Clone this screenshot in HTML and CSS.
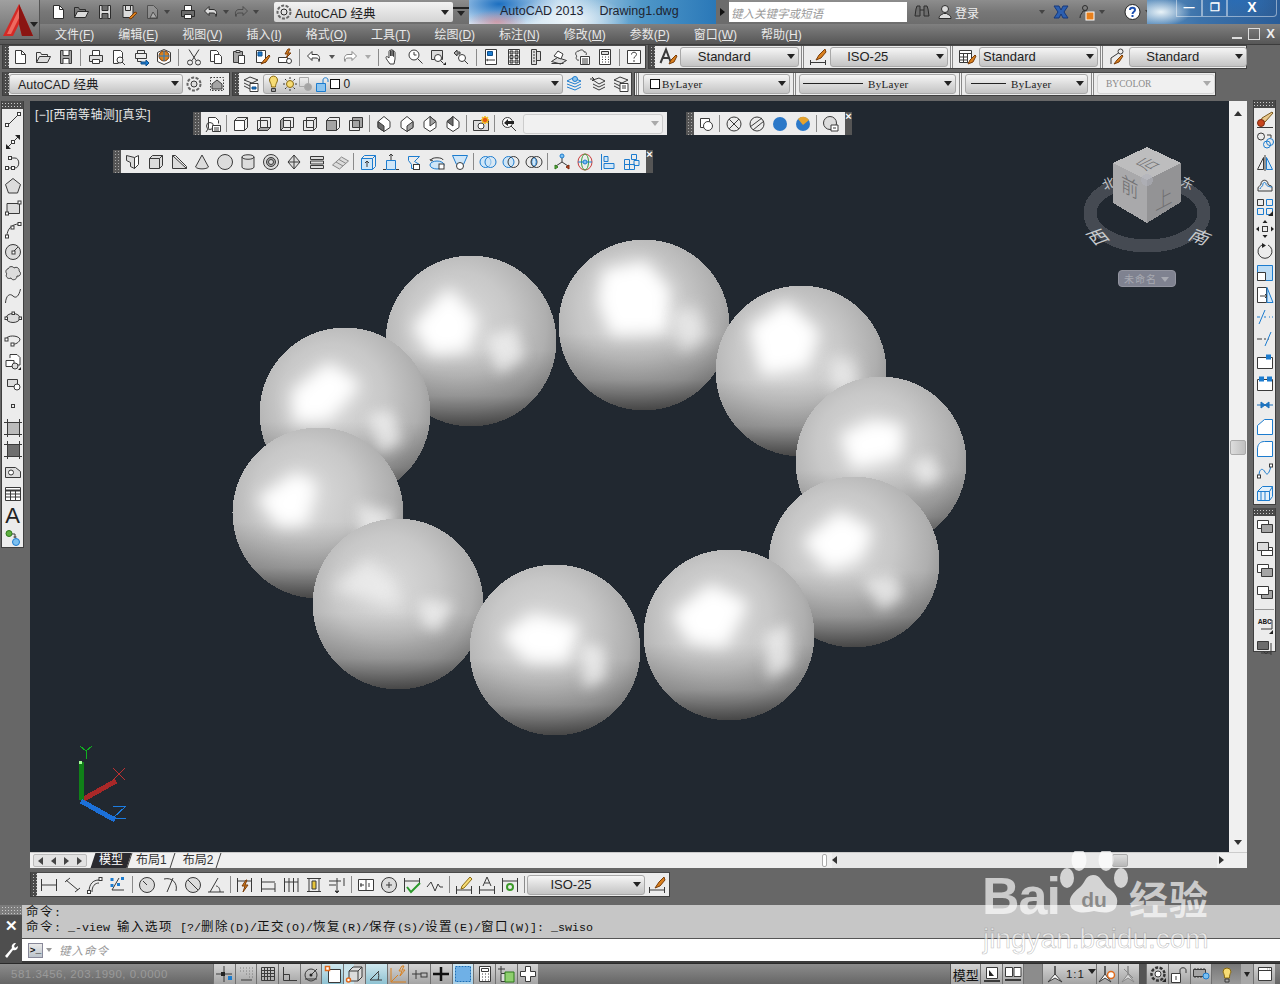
FILE: index.html
```html
<!DOCTYPE html>
<html lang="zh-CN">
<head>
<meta charset="utf-8">
<title>AutoCAD 2013 - Drawing1.dwg</title>
<link rel="stylesheet" href="styles.css">
</head>
<body>
<div class="app">

<a class="logo"><svg class="logosvg"><path class="lgr" d="M19 4L3 36h10l6-12 3 12h11z"/><path class="lgd" d="M19 4l14 32H22l-3-12z"/><path class="lgh" d="M19 9L7 34h4l8-16z"/></svg><i class="logoarrow"></i></a>

<header class="titlebar">
  <div class="qat">
    <span class="q"><svg class="ic wi"><path d="M4.5 2.5h6l4 4v9h-10z" class="wf"/><path d="M10.5 2.5v4h4"/></svg></span>
    <span class="q"><svg class="ic wi"><path d="M2.5 14.5v-10h4l1 2h6v2"/><path d="M2.5 14.5l3-6h11l-3 6z" class="lf"/></svg></span>
    <span class="q"><svg class="ic wi"><path d="M3.5 2.5h11v13h-11z" class="lf"/><path d="M6 2.5v5h6v-5M6 15.5v-5h6v5" class="df"/></svg></span>
    <span class="q"><svg class="ic wi"><path d="M3 2.5h10v12H3z" class="lf"/><path d="M5.500 2.500v5h5v-5"/><path d="M9 15l6-6 2 1-6 6z" class="o"/></svg></span>
    <span class="q"><svg class="ic wi dim"><path d="M4.500 2.500h6l4 4v9h-10z" class="gf"/><path d="M7 15l3-6 4 6z" class="lf"/></svg></span>
    <span class="qd"></span>
    <span class="q wide"><svg class="ic wi"><path d="M5.500 7V2.500h7V7" class="wf"/><path d="M2.500 7.500h13v6h-13z" class="df"/><path d="M5.500 11.500h7v4h-7z" class="wf"/></svg></span>
    <span class="q"><svg class="ic wi"><path d="M7 3.500L2.500 8 7 12.500V10h4c2 0 3 1 3 3.500 1.500-4 0-7-3-7H7z" class="lf"/></svg></span>
    <span class="qd"></span>
    <span class="q"><svg class="ic wi dim"><path d="M11 3.500L15.500 8 11 12.500V10H7c-2 0-3 1-3 3.500-1.500-4 0-7 3-7h4z"/></svg></span>
    <span class="qd"></span>
  </div>
  <div class="wscombo"><svg class="ic wi"><circle cx="9" cy="9" r="3"/><circle cx="9" cy="9" r="6.500" class="dash"/></svg><span>AutoCAD 经典</span><i class="car"></i></div>
  <span class="qmore"><i class="car"></i></span>
  <div class="glass"><span>AutoCAD 2013</span><span>Drawing1.dwg</span></div>
  <span class="sarrow"></span>
  <div class="search">键入关键字或短语</div>
  <div class="info">
    <svg class="ic wi"><path d="M3 6l1-3h3v10H2zM15 6l-1-3h-3v10h5zM7 7h4" class="df"/></svg>
    <svg class="ic wi login"><circle cx="9" cy="6" r="3.500" class="lf"/><path d="M3 15.500c0-4 4-4 4.500-5h3c.5 1 4.500 1 4.500 5z" class="lf"/></svg>
    <span class="login-t">登录</span>
    <i class="qd2"></i>
    <svg class="ic x"><path d="M2 3h5l2 4 2-4h5l-4 6 4 6h-5l-2-4-2 4H2l4-6z" class="blx"/></svg>
    <svg class="ic wi help1"><circle cx="8" cy="5" r="2.500"/><path d="M3 15c0-4 2-4 3-7h4v3" /><rect x="9" y="9" width="8" height="8" class="org"/></svg>
    <i class="qd2"></i>
    <svg class="ic help2"><circle cx="9.500" cy="9" r="7.500" class="wfb"/><path d="M7 7c0-3 5-3 5 0 0 2-2.500 1.500-2.500 4M9.500 12v2" class="blst"/></svg>
    <i class="qd2"></i>
  </div>
  <div class="glass2"><span class="wb">&#8212;</span><span class="wb rest">&#10064;</span><span class="wb close">X</span></div>
</header>

<nav class="menubar">
  <span>文件(<u>F</u>)</span><span>编辑(<u>E</u>)</span><span>视图(<u>V</u>)</span><span>插入(<u>I</u>)</span><span>格式(<u>O</u>)</span><span>工具(<u>T</u>)</span><span>绘图(<u>D</u>)</span><span>标注(<u>N</u>)</span><span>修改(<u>M</u>)</span><span>参数(<u>P</u>)</span><span>窗口(<u>W</u>)</span><span>帮助(<u>H</u>)</span>
  <div class="docbtns"><b class="d1"></b><b class="d2"></b><b class="d3">X</b></div>
</nav>

<div class="row r1">
 <div class="tb t-std">
  <i class="grip"></i>
  <span class="c"><svg class="ic"><path d="M4.500 2.500h6l4 4v9h-10z" class="wf"/><path d="M10.500 2.500v4h4"/></svg></span>
  <span class="c"><svg class="ic"><path d="M2.500 14.500v-10h4l1 2h6v2"/><path d="M2.500 14.500l3-6h11l-3 6z" class="lf"/></svg></span>
  <span class="c"><svg class="ic"><path d="M3.500 2.500h11v13h-11z" class="gf"/><path d="M6 2.500v5h6v-5M6 15.500v-5h6v5" class="wf"/></svg></span>
  <i class="s"></i>
  <span class="c"><svg class="ic"><path d="M5.500 7V2.500h7V7" class="wf"/><path d="M2.500 7.500h13v6h-13z" class="lf"/><path d="M5.500 11.500h7v4h-7z" class="wf"/></svg></span>
  <span class="c"><svg class="ic"><path d="M4.500 15.500v-13h7l2 2v6M4.500 15.500h5" class="wf"/><circle cx="11" cy="12" r="3"/><path d="M13 14l3 3"/></svg></span>
  <span class="c"><svg class="ic"><path d="M5.500 5V2.500h7V5M3.500 5.500h11v5h-11zM5.500 10.500v3h4"/><path d="M9 14h5v-2l3 3-3 3v-2H9z" class="bf"/></svg></span>
  <span class="c"><svg class="ic"><path d="M9 1.500l6.500 3v9L9 16.500l-6.500-3v-9z" class="wf"/><circle cx="9" cy="8" r="5" class="o"/><path d="M9 3v10M4 8h10" class="bs"/></svg></span>
  <i class="s"></i>
  <span class="c"><svg class="ic"><path d="M4 1.500l7 11M14 1.500l-7 11"/><circle cx="5" cy="14.500" r="2.500"/><circle cx="13" cy="14.500" r="2.500"/></svg></span>
  <span class="c"><svg class="ic"><path d="M3.500 2.500h6l2 2v9h-8z" class="wf"/><path d="M7.500 6.500h5l2 2v7h-7z" class="wf"/></svg></span>
  <span class="c"><svg class="ic"><path d="M3.500 3.500h9v11h-9z" class="gf"/><path d="M6 2.500h4v2H6z" class="lf"/><path d="M8.500 7.500h6v8h-6z" class="wf"/></svg></span>
  <span class="c"><svg class="ic"><path d="M3.500 2.500h9v12h-9z" class="wf"/><path d="M5 4h4v4H5z" class="bf"/><path d="M16 7l-5 5-3 4 5-2 4-6z" class="o"/></svg></span>
  <span class="c"><svg class="ic"><path d="M2.500 9.500h9v5h-9z" class="wf"/><path d="M12 1l-3 5h3l-2 4 5-5h-3l2-4z" class="o"/><circle cx="13" cy="13" r="2.500" class="wf"/></svg></span>
  <i class="s"></i>
  <span class="c"><svg class="ic"><path d="M7 3.500L2.500 8 7 12.500V10h4c2 0 3 1 3 3.500 1.500-4 0-7-3-7H7z" class="wf"/></svg></span>
  <span class="dd"></span>
  <span class="c"><svg class="ic gy"><path d="M11 3.500L15.500 8 11 12.500V10H7c-2 0-3 1-3 3.500-1.500-4 0-7 3-7h4z" class="wf"/></svg></span>
  <span class="dd gd"></span>
  <i class="s"></i>
  <span class="c"><svg class="ic"><path d="M6 16c-2-3-4-5-4-6.500s1.500-1 3 .5V3.500c0-1.300 1.500-1.300 1.500 0V8 2.500c0-1.300 1.500-1.300 1.500 0V8 3c0-1.300 1.500-1.300 1.500 0v5.500-4c0-1.300 1.500-1.300 1.500 0V11l-1 5z" class="wf"/></svg></span>
  <span class="c"><svg class="ic"><circle cx="7" cy="7" r="5" class="wf"/><path d="M7 4v3h2.500M10.500 10.500l5 5"/></svg></span>
  <span class="c"><svg class="ic"><path d="M2.500 2.500h11v9h-11z" class="lf"/><circle cx="9" cy="10" r="3.500" class="wf"/><path d="M11.500 12.500l3 3"/><path d="M14 17l3-3v3z" class="k"/></svg></span>
  <span class="c"><svg class="ic"><circle cx="10" cy="10" r="3.500" class="wf"/><path d="M12.500 12.500l3.500 3.500"/><path d="M2 5l3-3v2h3v2H5v2z" class="gf"/></svg></span>
  <i class="s"></i>
  <span class="c"><svg class="ic"><path d="M3.500 1.500h11v15h-11z" class="wf"/><path d="M5.500 3.500h5v4h-5z" class="bf"/><path d="M6 12h7M6 11l-1.500 1L6 13"/></svg></span>
  <span class="c"><svg class="ic"><path d="M3.500 1.500h11v15h-11z" class="wf"/><path d="M5 3h3v3H5zM10 3h3v3h-3zM5 7.500h3v3H5zM10 7.500h3v3h-3zM5 12h3v3H5zM10 12h3v3h-3z" class="gf"/></svg></span>
  <span class="c"><svg class="ic"><path d="M4.500 1.500h5v15h-5zM9.500 3.500h4v9h-4z" class="lf"/><path d="M6 4h2M6 7h2M6 10h2M6 13h2"/></svg></span>
  <span class="c"><svg class="ic"><path d="M1.500 13.500l6-4 9 3-6 3.500z" class="lf"/><path d="M4 8l4-5 5 3-2 5z" class="wf"/><path d="M1.500 15.500h12"/></svg></span>
  <span class="c"><svg class="ic"><path d="M6 3c-4 0-4 4-2 5-2 2 0 5 2 4M6 3c2-2 5-1 5 1 2-.5 3 1 2 3"/><path d="M7.500 8.500h9v8h-9z" class="wf"/><path d="M9 11h6M9 13h6M9 15h6"/></svg></span>
  <span class="c"><svg class="ic"><path d="M3.500 1.500h11v15h-11z" class="wf"/><path d="M5.500 3.500h7v3h-7z" class="lf"/><path d="M6 9h1M9 9h1M12 9h1M6 11.500h1M9 11.500h1M12 11.500h1M6 14h1M9 14h1M12 14h1"/></svg></span>
  <i class="s"></i>
  <span class="c"><svg class="ic"><path d="M2.500 2.500h13v13h-13z" class="wf"/><path d="M6.500 6.500c0-3 5-3 5 0 0 2-2.500 1.500-2.500 4M9 12v2" /></svg></span>
  <i class="t-end"></i>
 </div>
 <div class="tb t-sty">
  <i class="grip"></i><i class="gripd"></i>
  <span class="c c-a"><svg class="ic"><path d="M1.500 15L7 1.500 12 15M4 10h6" class="thick"/><path d="M17 7l-5 5-2 4 5-2 3-6z" class="o"/></svg></span>
  <div class="combo w-std">Standard<i class="car"></i></div>
  <i class="gs"></i>
  <span class="c c-a"><svg class="ic"><path d="M1.500 12v5M16.500 12v5M2 14.500h14"/><path d="M16 1l-6 6-3 5 5-2 5-6z" class="o"/></svg></span>
  <div class="combo w-std w-iso2">ISO-25<i class="car"></i></div>
  <i class="gs"></i>
  <span class="c c-a"><svg class="ic"><path d="M1.500 2.500h12v12h-12z" class="wf"/><path d="M1.500 5.500h12M1.500 9h8M1.500 12h8M5.500 5.500v9M9.500 5.500v9"/><path d="M17 7l-5 5-2 4 5-2 3-6z" class="o"/></svg></span>
  <div class="combo w-std left">Standard<i class="car"></i></div>
  <i class="gs"></i>
  <span class="c c-a"><svg class="ic"><circle cx="12.500" cy="3.500" r="2.500"/><path d="M10.500 5L3 10v6"/><path d="M14 7l-5 5-3 4 5-2 4-6z" class="o"/></svg></span>
  <div class="combo w-std">Standard<i class="car"></i></div>
 </div>
</div>

<div class="row r2">
 <div class="tb t-ws">
  <i class="grip"></i>
  <div class="combo w-ws left">AutoCAD 经典<i class="car"></i></div>
  <span class="c"><svg class="ic"><circle cx="9" cy="9" r="3" class="lf"/><circle cx="9" cy="9" r="6.500" class="dash"/></svg></span>
  <span class="c"><svg class="ic"><path d="M2.500 2.500h13v13h-13z" class="dot"/><path d="M4 9l5-4 5 4v5H4z" class="gf"/></svg></span>
 </div>
 <div class="tb t-lay">
  <i class="grip"></i>
  <span class="c c-l"><svg class="ic"><path d="M2 5l6-3 8 3-6 3zM2 8l6 3M2 11l6 3"/><path d="M8 8.500h8v8H8z" class="wf"/><path d="M10 12h4v2h-4z" class="bf"/></svg></span>
  <div class="combo w-lay left">
    <svg class="ic ic-s"><path d="M5 7a4 4 0 1 1 7 0c-1 2-1.500 3-1.500 5h-4c0-2-.5-3-1.500-5z" class="y"/><path d="M6.500 13.500h4v3h-4z" class="gf"/></svg>
    <svg class="ic ic-s"><circle cx="9" cy="9" r="3.500" class="y"/><path d="M9 2v2M9 14v2M2 9h2M14 9h2M4 4l1.500 1.500M14 4l-1.500 1.500M4 14l1.500-1.500M14 14l-1.500-1.500"/></svg>
    <svg class="ic ic-s lg"><path d="M2.500 2.500h9v9h-9z"/><circle cx="11" cy="12" r="3.500" class="gf"/></svg>
    <svg class="ic ic-s"><path d="M3.500 8.500h9v8h-9z" class="bf1"/><path d="M10 8V5c0-3 5-3 5 0v2" class="bs"/></svg>
    <i class="sw"></i><span class="zero">0</span><i class="car"></i>
  </div>
  <span class="c c-l"><svg class="ic"><path d="M2 6l6-3 8 3-6 3zM2 9l8 3 6-3M2 12l8 3 6-3" class="bs"/><circle cx="10" cy="4" r="2.500" class="bf1"/></svg></span>
  <span class="c c-l"><svg class="ic"><path d="M4 5l6-2 6 3-6 3zM4 9l6 3 6-3M4 12l6 3 6-3M1 4h4M3 2l2 2-2 2"/></svg></span>
  <span class="c c-l"><svg class="ic"><path d="M2 5l6-3 8 3-6 3zM2 8l6 3M2 11l6 3"/><path d="M8 8.500h8v8H8z" class="wf"/><path d="M10 11h4M10 13h4"/></svg></span>
 </div>
 <div class="tb t-prop">
  <i class="gs g0"></i>
  <div class="combo w-col serif left"><i class="sw sm"></i>ByLayer<i class="car"></i></div>
  <i class="gs"></i>
  <div class="combo w-lt serif left"><i class="ln"></i>ByLayer<i class="car"></i></div>
  <i class="gs"></i>
  <div class="combo w-lw serif left"><i class="ln sh"></i>ByLayer<i class="car"></i></div>
  <i class="gs"></i>
  <div class="combo w-bc serif left off">BYCOLOR<i class="car ga"></i></div>
 </div>
</div>

<main class="main">
 <aside class="lcol">
  <div class="vtb v-draw">
   <i class="vgrip"></i>
   <span class="v"><svg class="ic"><path d="M4 14L15 3"/><rect x="1.500" y="12.500" width="3" height="3" class="wf"/><rect x="13.500" y="1.500" width="3" height="3" class="wf"/></svg></span>
   <span class="v"><svg class="ic"><path d="M2 16L16 2"/><path d="M2 16v-5l5 5zM16 2v5l-5-5z" class="k"/><rect x="7.500" y="7.500" width="3" height="3" class="wf"/></svg></span>
   <span class="v"><svg class="ic"><path d="M4 13h7M7 3h4c5 0 5 10 0 10"/><rect x="1.500" y="11.500" width="3" height="3" class="wf"/><rect x="7.500" y="11.500" width="3" height="3" class="wf"/><rect x="4.500" y="1.500" width="3" height="3" class="wf"/></svg></span>
   <span class="v"><svg class="ic"><path d="M9 1.500l7.500 6-3 8.500h-9l-3-8.500z" class="lf"/></svg></span>
   <span class="v"><svg class="ic"><path d="M3 4.500h12.500v10H3z" class="lf"/><rect x="1.500" y="13" width="3" height="3" class="wf"/><rect x="14" y="2" width="3" height="3" class="wf"/></svg></span>
   <span class="v"><svg class="ic"><path d="M3 15C3 8 8 3 15 3"/><rect x="1.500" y="14" width="3" height="3" class="wf"/><rect x="7" y="5" width="3" height="3" class="wf"/><rect x="14" y="1.500" width="3" height="3" class="wf"/></svg></span>
   <span class="v"><svg class="ic"><circle cx="9" cy="9" r="7.500" class="lf"/><path d="M9 9l5-5"/><rect x="8" y="8" width="3" height="3" class="wf"/></svg></span>
   <span class="v"><svg class="ic"><path d="M4 4c1-3 5-3 6-1 3-2 6 1 5 3 3 2 1 6-2 5 0 4-5 5-6 2-4 2-6-3-4-4-2-2-1-5 1-5z" class="lf"/></svg></span>
   <span class="v"><svg class="ic"><path d="M1.500 16C2 8 6 6 9 9s6 0 7.500-7"/></svg></span>
   <span class="v"><svg class="ic"><ellipse cx="9" cy="9" rx="7" ry="4.500" class="lf"/><rect x="1" y="8" width="2.500" height="2.500" class="wf"/><rect x="15" y="8" width="2.500" height="2.500" class="wf"/><rect x="8" y="3" width="2.500" height="2.500" class="wf"/></svg></span>
   <span class="v"><svg class="ic"><path d="M2 8c1-4 12-4 14 0 0 3-5 6-8 5"/><rect x="7" y="12" width="3" height="3" class="wf"/><rect x="1" y="7" width="3" height="3" class="wf"/></svg></span>
   <span class="v"><svg class="ic"><path d="M6 5V1.500h7l3 3V12h-3" class="wf"/><path d="M2 7.500h8v6H2z" class="wf"/><circle cx="11" cy="13" r="3" class="lf"/><path d="M14 17l3-3v3z" class="k"/></svg></span>
   <span class="v"><svg class="ic"><path d="M3.500 4.500h10v7h-10z" class="lf"/><circle cx="13" cy="12" r="3" class="wf"/></svg></span>
   <span class="v"><svg class="ic"><rect x="7.500" y="7.500" width="3" height="3"/></svg></span>
   <span class="v"><svg class="ic"><path d="M3.500 3.500h12v12h-12z" class="ht"/><path d="M0 3.500h18M0 15.500h18M3.500 0v18M15.500 0v18"/></svg></span>
   <span class="v"><svg class="ic"><path d="M3.500 3.500h12v12h-12z" class="gra"/><path d="M0 3.500h18M0 15.500h18M3.500 0v18M15.500 0v18"/></svg></span>
   <span class="v"><svg class="ic"><path d="M1.500 4.500h10l5 4v6h-15z" class="lf"/><circle cx="7" cy="9.500" r="2.500" class="wf"/></svg></span>
   <span class="v"><svg class="ic"><path d="M1.500 2.500h15v13h-15z" class="wf"/><path d="M1.500 5.500h15" class="thick"/><path d="M1.500 9h15M1.500 12h15M6.500 5.500v10M11.500 5.500v10"/></svg></span>
   <span class="v vA">A</span>
   <span class="v"><svg class="ic"><circle cx="5" cy="4.500" r="3" class="gn"/><path d="M8 5h3v4M9.500 8h3"/><circle cx="12" cy="13" r="3.500" class="bl"/></svg></span>
  </div>
 </aside>

 <div class="work">
  <div class="wtop">
   <section class="viewport">
    <span class="vplabel">[−][西南等轴测][真实]</span>

    <svg class="scene" viewBox="30 101 1199 751">
     <defs>
      <radialGradient id="sg" cx=".43" cy=".4" r=".68">
       <stop offset="0" stop-color="#dcdcdc"/><stop offset=".45" stop-color="#c8c8c8"/><stop offset=".75" stop-color="#afafaf"/><stop offset="1" stop-color="#8a8a8a"/>
      </radialGradient>
      <linearGradient id="sd" x1="0" y1="0" x2="0" y2="1">
       <stop offset=".55" stop-color="#000" stop-opacity="0"/><stop offset=".82" stop-color="#000" stop-opacity=".2"/><stop offset="1" stop-color="#000" stop-opacity=".55"/>
      </linearGradient>
      <filter id="bl1" x="-60%" y="-60%" width="220%" height="220%"><feGaussianBlur stdDeviation="8"/></filter>
      <filter id="bl2" x="-60%" y="-60%" width="220%" height="220%"><feGaussianBlur stdDeviation="6.500"/></filter>
      <clipPath id="cc"><circle r="85.500"/></clipPath>
      <g id="ball"><circle class="sb" r="85.500"/><circle class="sh" r="85.500"/></g>
     </defs>

     <g transform="translate(644 325)"><use href="#ball"/><g clip-path="url(#cc)"><path class="h1" d="M-38-52L0-60 22-35 20 4-30 6-42-24z"/><path class="h3" d="M30-10l22-5 8 25-20 15z"/></g></g>
     <g transform="translate(801 371)"><use href="#ball"/><g clip-path="url(#cc)"><path class="h1" d="M-48-42L-15-65 14-38 4-8-36 0z"/><path class="h3" d="M30-10l20 0 5 25-20 5z"/></g></g>
     <g transform="translate(881 462)"><use href="#ball"/><g clip-path="url(#cc)"><path class="h1" d="M-36-25L-8-38 18-34 16-8-26 2z"/><path class="h2" d="M32 2l18-8 10 22-20 8z"/></g></g>
     <g transform="translate(854 562)"><use href="#ball"/><g clip-path="url(#cc)"><path class="h1" d="M-46-20L-14-46 14-30 4 -6-24 4z"/><path class="h2" d="M10 18l30-4 8 20-20 14z"/></g></g>
     <g transform="translate(729 635)"><use href="#ball"/><g clip-path="url(#cc)"><path class="h1" d="M-52-20L-18-46 14-30-6 8-38 4z"/><path class="h2" d="M36 0l22-10 4 40-22 14z"/></g></g>

     <g transform="translate(471 341)"><use href="#ball"/><g clip-path="url(#cc)"><path class="h1" d="M-54-14L-22-48 2-20-6 6-38 10z"/><path class="h2" d="M16-4l28-8 8 28-24 16z"/></g></g>
     <g transform="translate(345 413)"><use href="#ball"/><g clip-path="url(#cc)"><path class="h1" d="M-50-20L-16-46 10-28-18 4-48 6z"/><path class="h2" d="M24 2l22-4 10 30-20 12z"/></g></g>
     <g transform="translate(318 513)"><use href="#ball"/><g clip-path="url(#cc)"><path class="h1" d="M-56-14L-22-36-6-28-14 8-38 10z"/><path class="h2" d="M40-8l36 8-10 20-22 6z"/></g></g>
     <g transform="translate(398 604)"><use href="#ball"/><g clip-path="url(#cc)"><path class="h3" d="M-62-16L-30-42-10-24 0 0-24-6z"/><path class="h2" d="M22-4l32 4-14 26-14-4z"/></g></g>
     <g transform="translate(555 650)"><use href="#ball"/><g clip-path="url(#cc)"><path class="h1" d="M-48-14L-22-32 20-22 10 8-26 8z"/><path class="h2" d="M26-6l22 4 2 30-20 10z"/></g></g>

     <!-- view cube -->
     <ellipse class="ring" cx="1147" cy="213" rx="57" ry="33"/>
     <text class="vcdir" x="1109" y="188" transform="rotate(-25 1109 184)">北</text>
     <text class="vcdir" x="1187" y="188" transform="rotate(25 1187 184)">东</text>
     <text class="vcdirb" transform="matrix(.95 -.35 .6 .72 1102 242)">西</text>
     <text class="vcdirb" transform="matrix(.95 .35 -.6 .72 1196 242)">南</text>
     <path class="cube-l" d="M1113 163l34 17v43l-34-20z"/>
     <path class="cube-r" d="M1181 163l-34 17v43l34-21z"/>
     <path class="cube-t" d="M1147 147l34 16-34 17-34-17z"/>
     <circle class="cube-c" cx="1147" cy="180" r="6"/>
     <text class="cubet" transform="matrix(.8 .42 0 .95 1121 190)">前</text>
     <text class="cubet" transform="matrix(.8 -.42 0 .95 1155 211)">上</text>
     <text class="cubet" transform="matrix(.72 -.36 .72 .36 1145 171)">后</text>

     <!-- UCS -->
     <path class="ux" d="M113 768l12 12M125 768l-12 12"/>
     <path class="uy" d="M80 746l6 5 6-5M86 751v8"/>
     <path class="uz" d="M113 806h13l-13 12h13"/>
     <path class="barr" d="M82 800l34-19"/><path class="barg" d="M81 800v-38"/><path class="barb" d="M81 801l34 19"/>
     <rect class="barw" x="79" y="761" width="3" height="3"/>
    </svg>

    <div class="vcname">未命名<i></i></div>

    <div class="ft ft1">
     <i class="fgrip"></i>
     <span class="c f"><svg class="ic"><path d="M4.500 13.500v-11h7l3 3v3" class="wf"/><circle cx="6" cy="11" r="3.500"/><path d="M2 17l2-3"/><path d="M8.500 10.500h8v6h-8z" class="wf"/><path d="M10 13h5M10 15h5"/></svg></span>
     <i class="s"></i>
     <span class="c f"><svg class="ic"><path d="M2.500 5.500h10v10h-10z" class="wf"/><path d="M2.500 5.500l3-3h10v10l-3 3M12.500 5.500l3-3"/></svg></span>
     <span class="c f"><svg class="ic"><path d="M5.500 2.500h10v10h-10zM2.500 5.500h10v10h-10z" class="nf"/><path d="M2.500 15.500l3-3h10l-3 3z" class="gf"/></svg></span>
     <span class="c f"><svg class="ic"><path d="M5.500 2.500h10v10h-10zM2.500 5.500h10v10h-10z" class="nf"/><path d="M2.500 5.500l3-3v10l-3 3z" class="gf"/></svg></span>
     <span class="c f"><svg class="ic"><path d="M5.500 2.500h10v10h-10zM2.500 5.500h10v10h-10z" class="nf"/><path d="M12.500 5.500l3-3v10l-3 3z" class="lf"/></svg></span>
     <span class="c f"><svg class="ic"><path d="M2.500 5.500h10v10h-10z" class="gf"/><path d="M5.500 2.500h10v10l-3 3M2.500 5.500l3-3"/></svg></span>
     <span class="c f"><svg class="ic"><path d="M5.500 2.500h10v10h-10z" class="gf"/><path d="M2.500 5.500h10v10h-10z" class="nf"/></svg></span>
     <i class="s"></i>
     <span class="c f"><svg class="ic"><path d="M9 1.500l6 5v6l-6 4-6-4v-6z" class="wf"/><path d="M3 12.500V6.500L9 11v5.500z" class="df"/></svg></span>
     <span class="c f"><svg class="ic"><path d="M9 1.500l6 5v6l-6 4-6-4v-6z" class="wf"/><path d="M15 12.500V6.500L9 11v5.500z" class="gf"/></svg></span>
     <span class="c f"><svg class="ic"><path d="M9 1.500l6 5v6l-6 4-6-4v-6z" class="wf"/><path d="M9 1.500l6 5L9 11z" class="gf"/></svg></span>
     <span class="c f"><svg class="ic"><path d="M9 1.500l6 5v6l-6 4-6-4v-6z" class="wf"/><path d="M9 1.500L3 6.500 9 11z" class="df"/></svg></span>
     <i class="s"></i>
     <span class="c f"><svg class="ic"><path d="M1.500 5.500h15v10h-15z" class="lf"/><circle cx="9" cy="11" r="3" class="wf"/><path d="M13 1l1 2 2-1-1 2 2 1-2 1 1 2-2-1-1 2-1-2-2 1 1-2-2-1 2-1-1-2 2 1z" class="burst"/></svg></span>
     <i class="s"></i>
     <span class="c f"><svg class="ic"><circle cx="7.500" cy="7.500" r="5" class="wf"/><path d="M11 11l5 5"/><path d="M4 8l4-4v2h6v3H8v2z" class="k"/></svg></span>
     <div class="combo fcombo"><i class="car ga"></i></div>
    </div>

    <div class="ft ft2">
     <i class="fgrip"></i>
     <span class="c f"><svg class="ic"><path d="M3.500 3.500h9v9h-9z" class="wf"/><circle cx="11" cy="11" r="4.500" class="wf"/></svg></span>
     <i class="s"></i>
     <span class="c f"><svg class="ic"><circle cx="9" cy="9" r="7"/><path d="M4 4l10 10M14 4L4 14"/></svg></span>
     <span class="c f"><svg class="ic"><circle cx="9" cy="9" r="7"/><path d="M2 12l12-9M5 15l11-9"/></svg></span>
     <span class="c f"><svg class="ic ns"><circle cx="9" cy="9" r="7" class="ball-b"/></svg></span>
     <span class="c f"><svg class="ic ns"><circle cx="9" cy="9" r="7" class="ball-b"/><path d="M4 4a7 7 0 0 1 11 1l-6 5z" class="ball-o"/></svg></span>
     <i class="s"></i>
     <span class="c f"><svg class="ic"><circle cx="8" cy="8" r="6.500" class="lf"/><path d="M9 10h7v6H9z" class="wf"/><path d="M11 13h3"/></svg></span>
     <b class="fx">×</b>
    </div>

    <div class="ft ft3">
     <i class="fgrip"></i>
     <span class="c f"><svg class="ic"><path d="M2.500 2.500l8 2v11l-4-2v-4l-4-2z" class="lf"/><path d="M10.500 4.500l4-2v9l-4 4z" class="wf"/></svg></span>
     <span class="c f"><svg class="ic"><path d="M2.500 5.500l3-3h10v10l-3 3h-10z" class="lf"/><path d="M2.500 5.500h10v10M12.500 5.500l3-3"/></svg></span>
     <span class="c f"><svg class="ic"><path d="M2.500 2.500v13h14z" class="lf"/><path d="M2.500 2.500l3 0 11 11v2"/></svg></span>
     <span class="c f"><svg class="ic"><path d="M9 2L2.500 14c2 2.500 11 2.500 13 0z" class="lf"/></svg></span>
     <span class="c f"><svg class="ic"><circle cx="9" cy="9" r="7.500" class="lf"/></svg></span>
     <span class="c f"><svg class="ic"><path d="M3 4c0-3 12-3 12 0v10c0 3-12 3-12 0z" class="lf"/><path d="M3 4c0 3 12 3 12 0"/></svg></span>
     <span class="c f"><svg class="ic"><circle cx="9" cy="9" r="7.500" class="lf"/><circle cx="9" cy="9" r="4.500" class="gf"/><circle cx="9" cy="9" r="2.500" class="lf"/></svg></span>
     <span class="c f"><svg class="ic"><path d="M9 2l6 7-6 7-6-7z" class="lf"/><path d="M9 2v14M3 9h12"/></svg></span>
     <span class="c f"><svg class="ic"><path d="M2.500 3.500h13v3h-13zM2.500 8h13v3h-13zM2.500 12.500h13v3h-13z" class="lf"/></svg></span>
     <span class="c f"><svg class="ic gy"><path d="M1.500 12l9-8 7 4-9 8z" class="lf"/><path d="M5 9l7 4M8 6.500l7 4"/></svg></span>
     <i class="s"></i>
     <span class="c f"><svg class="ic"><path d="M2.500 5.500h11v11h-11z" class="lb"/><path d="M2.500 5.500l3-3h11v11l-3 3M13.500 5.500l3-3" class="bs"/><path d="M8 14V8M6 10l2-2 2 2"/></svg></span>
     <span class="c f"><svg class="ic"><path d="M4.500 7.500h9v9h-9z" class="lb"/><path d="M9 7V1M7 3l2-2 2 2M1 16.500h3M14 16.500h3"/></svg></span>
     <span class="c f"><svg class="ic"><path d="M3.500 3.500h11l-5 5 5 3v4h-8v-4l-3-4z" class="bs"/><rect x="8.500" y="11.500" width="6" height="5" class="wf"/></svg></span>
     <span class="c f"><svg class="ic"><ellipse cx="9" cy="12" rx="7" ry="4" class="lb"/><path d="M3 7c0-3 12-3 12 0" /><path d="M2 6l1 2 2-1"/><rect x="11" y="11" width="5" height="5" class="wf"/></svg></span>
     <span class="c f"><svg class="ic"><path d="M1.500 2.500h15l-4 9h-7z" class="lb"/><circle cx="9" cy="13" r="3.500" class="wf"/></svg></span>
     <i class="s"></i>
     <span class="c f"><svg class="ic"><circle cx="6.500" cy="9" r="5.500" class="lb"/><circle cx="11.500" cy="9" r="5.500" class="lb bs2"/></svg></span>
     <span class="c f"><svg class="ic"><circle cx="6.500" cy="9" r="5.500" class="lb"/><circle cx="11.500" cy="9" r="5.500" class="nf"/></svg></span>
     <span class="c f"><svg class="ic"><circle cx="6.500" cy="9" r="5.500" class="nf"/><path d="M9 4.500a5.500 5.500 0 0 1 0 9 5.500 5.500 0 0 1 0-9z" class="lb"/><circle cx="11.500" cy="9" r="5.500" class="nf"/></svg></span>
     <i class="s"></i>
     <span class="c f"><svg class="ic"><path d="M9 9V3M9 9l-6 4M9 9l6 4"/><circle cx="9" cy="3" r="2" class="bl"/><path d="M2 12l3 2-3 2z" class="gn"/><path d="M16 12l-3 2 3 2z" class="rf"/></svg></span>
     <span class="c f"><svg class="ic"><ellipse cx="9" cy="9" rx="7" ry="8" class="red"/><ellipse cx="9" cy="9" rx="3.500" ry="8" class="grn"/><path d="M2 9h14" class="bs"/><circle cx="9" cy="9" r="2" class="bl"/></svg></span>
     <span class="c f"><svg class="ic"><path d="M2.500 1v16M5 3.500h4v5H5zM5 10.500h10v5H5z" class="lb"/></svg></span>
     <span class="c f"><svg class="ic"><path d="M2.500 6.500h5v5h-5zM7.500 11.500h5v5h-5zM9.500 1.500h5v5h-5zM2.500 11.500h5v5h-5zM12 7.500h5v5h-5z" class="bs"/></svg></span>
     <b class="fx">×</b>
    </div>
   </section>
   <div class="vscroll">
    <i class="ua"></i>
    <i class="vthumb"></i>
    <i class="da"></i>
   </div>
  </div>
  <div class="tabs">
   <span class="nav"><i class="n1"></i><i class="n2"></i><i class="n3"></i><i class="n4"></i></span>
   <span class="tab active">模型</span><span class="tab">布局1</span><span class="tab">布局2</span>
   <div class="hscroll"><i class="hgrab"></i><i class="la"></i><i class="hthumb"></i><i class="ra"></i></div>
  </div>
 </div>

 <aside class="rcol">
  <div class="vtb v-mod">
   <i class="vgrip"></i>
   <span class="v"><svg class="ic"><path d="M16 2l1 1-8 9-4-1 1-3z" class="br"/><circle cx="5" cy="13" r="3.500" class="rf"/><path d="M1 17.500h16"/></svg></span>
   <span class="v"><svg class="ic"><circle cx="5" cy="4.500" r="3.500"/><path d="M11 3h4v3"/><circle cx="11" cy="12.500" r="3.500" class="bs"/><circle cx="14" cy="10" r="3.500" class="bs"/></svg></span>
   <span class="v"><svg class="ic"><path d="M9 1v16"/><path d="M7.500 3.500v12h-6z"/><path d="M10.500 3.500v12h6z" class="lb"/></svg></span>
   <span class="v"><svg class="ic"><path d="M2 15v-3c0-2 3-2 3-4 0-5 7-5 7 0 0 2 4 1 4 3v4z"/><path d="M4 13c0-2 3-2 3-5 0-2 3-2 3 0s4 3 6 3" class="bs"/></svg></span>
   <span class="v"><svg class="ic"><path d="M1.500 1.500h6v6h-6z"/><path d="M10.500 1.500h6v6h-6zM1.500 10.500h6v6h-6zM10.500 10.500h6v6h-6z" class="bs"/><path d="M17 13v5h-5z" class="k"/></svg></span>
   <span class="v"><svg class="ic"><rect x="6.500" y="6.500" width="5" height="5"/><path d="M9 0l2.500 3h-5zM9 18l-2.500-3h5zM0 9l3-2.500v5zM18 9l-3 2.500v-5z" class="k"/></svg></span>
   <span class="v"><svg class="ic"><path d="M6 3a7 7 0 1 0 6 0"/><path d="M6 1v5l4-2.500z" class="k"/></svg></span>
   <span class="v"><svg class="ic"><path d="M1.500 1.500h15v15h-15z" class="lb2"/><path d="M1.500 8.500h8v8h-8z" class="wf"/></svg></span>
   <span class="v"><svg class="ic"><path d="M1.500 1.500h9v15h-9z" class="wf"/><path d="M11 1.500l6 15h-6z" class="lb"/><path d="M4 10h7M9 8l2 2-2 2"/></svg></span>
   <span class="v"><svg class="ic bs3"><path d="M3 16L9 2"/><path d="M1 9h3M13 9h1M16 9h1M8 9h2"/></svg></span>
   <span class="v"><svg class="ic"><path d="M1 9h5M8 9h2M12 9h1" /><path d="M9 16l6-14" class="bs"/></svg></span>
   <span class="v"><svg class="ic"><path d="M1.500 5.500h15v11h-15z" class="wf"/><rect x="10" y="2.500" width="5" height="5" class="bl0"/></svg></span>
   <span class="v"><svg class="ic"><path d="M1.500 5.500h15v11h-15z" class="wf"/><rect x="3" y="2.500" width="5" height="5" class="bl0"/><rect x="11" y="2.500" width="5" height="5" class="bl0"/></svg></span>
   <span class="v"><svg class="ic"><path d="M1 9h16M5 6v6l4-3zM13 6v6L9 9z" class="bl00"/></svg></span>
   <span class="v"><svg class="ic"><path d="M1.500 7.500l7-6h8v15h-15z" class="wf2"/></svg></span>
   <span class="v"><svg class="ic"><path d="M1.500 16.500V9c0-5 3-7.500 7-7.500h8v15z" class="wf2"/></svg></span>
   <span class="v"><svg class="ic"><path d="M3 14c0-8 4-8 6-4s4 2 6-6" class="bs"/><rect x="1.500" y="13" width="3" height="3" class="wf"/><rect x="13.500" y="2" width="3" height="3" class="wf"/></svg></span>
   <span class="v"><svg class="ic bsall"><path d="M1.500 7.500h12v9h-12zM1.500 7.500l5-5h10l-3 5M13.500 16.500l3-4v-10M5 7.500v9M9 7.500v9"/></svg></span>
  </div>
  <div class="vtb v-ord">
   <i class="vgrip"></i>
   <span class="v"><svg class="ic"><path d="M1.500 2.500h11v8h-11z" class="wf"/><path d="M5.500 6.500h11v8h-11z" class="gf"/></svg></span>
   <span class="v"><svg class="ic"><path d="M5.500 7.500h11v8h-11z" class="wf"/><path d="M1.500 2.500h11v8h-11z" class="lf"/><path d="M5.500 10.500h11v5h-11z" class="wf"/></svg></span>
   <span class="v"><svg class="ic"><path d="M1.500 2.500h11v8h-11z" class="wf"/><path d="M5.500 6.500h11v8h-11z" class="gf"/></svg></span>
   <span class="v"><svg class="ic"><path d="M5.500 6.500h11v8h-11z" class="gf"/><path d="M1.500 2.500h11v8h-11z" class="wf"/></svg></span>
   <i class="vsep"></i>
   <span class="v"><span class="abc">ABC</span><svg class="ic abcs"><path d="M14 3h2v9H5"/><path d="M17 13v4h-4z" class="k"/></svg></span>
   <span class="v"><svg class="ic"><path d="M1.500 2.500h11v8h-11z" class="df"/><path d="M5 14h10M15 4v12M7 12l3 3M13 12l-3 3" /></svg></span>
  </div>
 </aside>
</main>

<div class="row dimrow">
 <div class="tb t-dim">
  <i class="grip"></i>
  <span class="c d"><svg class="ic"><path d="M1.500 3v12M16.500 3v12M2 9h14"/></svg></span>
  <span class="c d"><svg class="ic"><path d="M2 6l5-4M12 16l5-4M3 4l12 10"/></svg></span>
  <span class="c d"><svg class="ic"><path d="M3 16C3 8 7 4 13 4M6 16C6 10 9 7 13 7" class="nf"/><rect x="1.500" y="14.500" width="3" height="3" class="wf"/><rect x="13" y="1.500" width="3" height="3" class="wf"/></svg></span>
  <span class="c d"><svg class="ic"><path d="M3 14h12M10 2l-7 12" /><rect x="1.500" y="2" width="3" height="3" class="bl0"/><rect x="1.500" y="8" width="3" height="3" class="bl0"/><rect x="12" y="1" width="3" height="3" class="bl0"/><rect x="8" y="7" width="3" height="3" class="bl0"/></svg></span>
  <i class="s"></i>
  <span class="c d"><svg class="ic"><circle cx="9" cy="9" r="7.500" class="lf"/><path d="M9 9L5 5"/></svg></span>
  <span class="c d"><svg class="ic"><path d="M3 3c8-2 14 4 12 12"/><path d="M12 2L6 16"/></svg></span>
  <span class="c d"><svg class="ic"><circle cx="9" cy="9" r="7.500" class="lf"/><path d="M4 4l10 10"/></svg></span>
  <span class="c d"><svg class="ic"><path d="M1 16h16M3 16L11 2M13 16c0-4-2-6-4-6"/></svg></span>
  <i class="s"></i>
  <span class="c d"><svg class="ic"><path d="M1.500 2v14M15.500 2v14M2 5h13"/><path d="M10 4L6 10h3l-2 6 5-7H9l2-5z" class="o"/></svg></span>
  <span class="c d"><svg class="ic"><path d="M2.500 2v14M16 7v9M3 6h13M3 13h13"/></svg></span>
  <span class="c d"><svg class="ic"><path d="M2.500 2v14M7 2v14M11.500 2v14M16 2v14M3 6h13"/></svg></span>
  <span class="c d"><svg class="ic"><path d="M2 2.500h14M2 15.500h14M4 3v12M14 3v12"/><path d="M7 5h4v8H7z" class="y2"/></svg></span>
  <span class="c d"><svg class="ic"><path d="M1 5h12M1 9h7M9 2v12"/><path d="M16 2v8M8 15h3l-2 2-2-2z" class="k2"/></svg></span>
  <i class="s"></i>
  <span class="c d"><svg class="ic"><path d="M1.500 3.500h15v11h-15z" class="wf"/><path d="M9 3.500v11M3 9h4M4 7v4"/><path d="M12 7v4"/></svg></span>
  <span class="c d"><svg class="ic"><circle cx="9" cy="9" r="7.500" class="lf"/><path d="M6 9h6M9 6v6"/></svg></span>
  <span class="c d"><svg class="ic"><path d="M1.500 2v14M16.500 2v5M2 5h14"/><path d="M4 11l4 5 9-9" class="gnck"/></svg></span>
  <span class="c d"><svg class="ic"><path d="M1 11l4-5 4 9 3-7 2 3h3"/></svg></span>
  <i class="s"></i>
  <span class="c d"><svg class="ic"><path d="M1.500 10v8M16.500 10v8M2 14h14"/><path d="M15 1l2 2-8 9-3 1 1-3z" class="y"/></svg></span>
  <span class="c d"><svg class="ic"><path d="M1.500 10v8M16.500 10v8M2 14h14M5 10l4-9 4 9M6.500 7h5"/></svg></span>
  <span class="c d"><svg class="ic"><path d="M1.500 2v14M16.500 2v14M2 5h14"/><circle cx="9" cy="11" r="3" class="gn3"/></svg></span>
  <i class="s"></i>
  <div class="combo w-iso">ISO-25<i class="car"></i></div>
  <span class="c d"><svg class="ic"><path d="M1.500 11v6M16.500 11v6M2 14h14"/><path d="M16 1l-5 5-4 6 5-2 5-6z" class="o"/></svg></span>
 </div>
</div>

<section class="cmd">
 <div class="cmdside">
  <i class="cgrip"></i>
  <span class="cx">✕</span>
  <svg class="ic wrench"><path d="M3 16l7-8c-1-3 1-5 4-5l-2 3 1 2 3-2c0 3-2 5-5 4l-6 8z" class="wfn"/></svg>
 </div>
 <div class="cmdmain">
  <div class="hist">
   <p><span class="zh">命令</span>:</p>
   <p><span class="zh">命令</span>: _-view <span class="zh">输入选项</span> [?/<span class="zh">删除</span>(D)/<span class="zh">正交</span>(O)/<span class="zh">恢复</span>(R)/<span class="zh">保存</span>(S)/<span class="zh">设置</span>(E)/<span class="zh">窗口</span>(W)]: _swiso</p>
  </div>
  <div class="cinput"><span class="prompt">&gt;_</span><i class="pd"></i><span class="ph">键入命令</span></div>
 </div>
</section>

<footer class="status">
 <span class="coords">581.3456, 203.1990, 0.0000</span>
 <div class="sgrp">
  <span class="sb"><svg class="ic"><path d="M9 1v16M1 9h16"/><rect x="6" y="7" width="4" height="4" class="k"/><rect x="13" y="11" width="4" height="4" class="bl0"/></svg></span>
  <span class="sb"><svg class="ic"><path d="M3 3h.5M6 3h.5M9 3h.5M12 3h.5M15 3h.5M3 6h.5M6 6h.5M9 6h.5M12 6h.5M15 6h.5M15 9h.5M12 9h.5M9 9h.5M15 12h.5M12 12h.5M4 15h11"/></svg></span>
  <span class="sb"><svg class="ic"><path d="M2.500 2.500h13v13h-13zM2.500 5.500h13M2.500 8.500h13M2.500 11.500h13M5.500 2.500v13M8.500 2.500v13M11.500 2.500v13"/></svg></span>
  <span class="sb"><svg class="ic"><path d="M3.500 2v13.500H17M3.500 9.500h6v6"/></svg></span>
  <span class="sb"><svg class="ic"><circle cx="9" cy="10" r="6"/><path d="M9 10l6-6M3 14h12"/><circle cx="9" cy="10" r="1.500" class="k"/></svg></span>
  <span class="sb on"><svg class="ic"><path d="M4.500 4.500h12v13h-12z" class="wf"/><rect x="1.500" y="1.500" width="4" height="4" class="ors"/></svg></span>
  <span class="sb on2"><svg class="ic"><path d="M4 6l4-4h9v10l-4 4H4z" class="lf"/><path d="M4 6h9v10M13 6l4-4"/><circle cx="3.500" cy="15" r="2" class="ors"/></svg></span>
  <span class="sb on"><svg class="ic"><path d="M3 15h12M3 15l9-9"/><path d="M11 7c1 2 1 5 0 8" class="nf"/></svg></span>
  <span class="sb"><svg class="ic"><path d="M2 17V3M2 17h15M2 17l7-7M13 1l-3 5h3l-2 5 5-6h-3l2-4z" class="o2"/></svg></span>
  <span class="sb"><svg class="ic"><path d="M1 9h9M5 5v9"/><rect x="10" y="8" width="6" height="4"/></svg></span>
  <span class="sb"><svg class="ic"><path d="M1 9h16M9 2v14" class="thick2"/></svg></span>
  <span class="sb on3"><svg class="ic"><path d="M1.500 1.500h15v15h-15z" class="chk"/></svg></span>
  <span class="sb"><svg class="ic"><path d="M3.500 1.500h11v15h-11z" class="wf"/><path d="M5.500 3.500h7v3h-7zM6 9h1M9 9h1M12 9h1M6 12h1M9 12h1M12 12h1M6 15h1M9 15h1M12 15h1"/></svg></span>
  <span class="sb"><svg class="ic"><path d="M1 4h7M4 1v7"/><path d="M4 8.500h8v8H4z" class="lf"/><path d="M8 7h9v10H8z" class="gn2"/></svg></span>
  <span class="sb"><svg class="ic"><path d="M6.500 1.500h5v5h5v5h-5v5h-5v-5h-5v-5h5z" class="wf"/></svg></span>
 </div>
 <div class="sright">
  <span class="sm-t">模型</span>
  <span class="sb"><svg class="ic"><path d="M3.500 2.500h11v11h-11z" class="wf"/><path d="M6 11V5l5 6z" class="k"/><path d="M1 16h16" class="thick"/></svg></span>
  <span class="sb wide"><svg class="ic"><path d="M1.500 2.500h7v9h-7zM10 2.500h7v9h-7z" class="wf"/><path d="M1 15h16" class="thick"/></svg></span>
  <i class="gap"></i>
  <span class="sb anno"><svg class="ic"><path d="M9 1v8l-7 8 7-4 7 4-7-8z" class="wf"/></svg><b>1:1</b><i class="car"></i></span>
  <span class="sb"><svg class="ic"><path d="M7 1v8l-6 8 6-4 6 4-6-8z" class="wf"/><circle cx="13" cy="10" r="3.500" class="ors"/></svg></span>
  <span class="sb"><svg class="ic gy"><path d="M8 1v8l-6 8 6-4 6 4-6-8z" class="lf"/><path d="M4 4l9 9" /></svg></span>
  <i class="gap2"></i>
  <span class="sb"><svg class="ic"><circle cx="9" cy="9" r="3" class="wf"/><circle cx="9" cy="9" r="6.500" class="dash2"/><path d="M17 13v4h-4z" class="k"/></svg></span>
  <span class="sb"><svg class="ic"><path d="M1.500 8.500h9v9h-9z" class="wf"/><path d="M10 8V5c0-3 6-3 6 0v3"/><path d="M6 11v4"/></svg></span>
  <span class="sb"><svg class="ic"><path d="M1.500 4.500h12v7h-12z" class="gf"/><path d="M3 3v1M6 3v1M9 3v1M12 3v1M3 12v1M6 12v1M9 12v1"/><circle cx="14" cy="11" r="3" class="bl"/></svg></span>
  <span class="sb bulb"><svg class="ic"><path d="M5 7a4 4 0 1 1 8 0c-1 2-1.500 3-1.500 6h-5c0-3-.5-4-1.500-6z" class="y"/><path d="M7 14h4v3H7z" class="gf"/></svg></span>
  <span class="stri"><i class="car"></i></span>
  <span class="sb"><svg class="ic"><path d="M2.500 2.500h13v13h-13z" class="wf"/><path d="M2.500 5.500h13M11 4h.5M13 4h.5"/></svg></span>
 </div>
</footer>

<div class="watermark">
 <span class="wm-bai">Bai</span>
 <svg class="wm-paw">
  <ellipse cx="19" cy="9" rx="7.500" ry="11"/><ellipse cx="46" cy="9" rx="7.500" ry="11"/>
  <ellipse cx="7" cy="27" rx="7" ry="10"/><ellipse cx="61" cy="27" rx="7" ry="10"/>
  <path d="M33 24c8 0 9 8 15 13 6 4 12 10 8 19-3 7-14 6-22 4-8 2-19 3-23-4-4-9 3-15 8-19 6-4 6-13 14-13z"/>
  <text x="34" y="56" class="wm-du">du</text>
 </svg>
 <span class="wm-zh">经验</span>
 <span class="wm-url">jingyan.baidu.com</span>
</div>

</div>
</body>
</html>
```
FILE: styles.css
```css
* { box-sizing: border-box; }
html, body { margin: 0; padding: 0; }
body { width: 1280px; height: 984px; overflow: hidden; background: #676767; font-family: "Liberation Sans", "Noto Sans CJK SC", sans-serif; font-size: 12px; color: #222; }
.app { position: relative; width: 1280px; height: 984px; display: flex; flex-direction: column; }
i, b { display: block; font-style: normal; }

/* svg icon base */
.ic { width: 18px; height: 18px; fill: none; stroke: #3a3a3a; stroke-width: 1; flex: none; overflow: visible; }
.wf { fill: #fff; } .lf { fill: #dcdcdc; } .gf { fill: #a4a4a4; } .df { fill: #6c6c6c; } .k { fill: #222; stroke: none; } .nf { fill: none; }
.o { fill: #d9801e; stroke: #7a3d0a; } .o2 { stroke: #d9801e; } .y { fill: #f7dc74; stroke: #8a6a10; } .bf { fill: #1c7ccf; stroke: #0e4f8c; } .bf1 { fill: #8cc4ee; stroke: #1c7ccf; }
.bs { stroke: #1c7ccf; } .lb { fill: #cfe6f8; stroke: #1c7ccf; } .lb2 { fill: #bddcf4; stroke: #1c7ccf; } .bl { fill: #7cc0f0; stroke: #1c7ccf; } .bl0 { fill: #1c7ccf; stroke: none; } .bl00 { stroke: #1c6fb8; fill: #1c7ccf; }
.blx { fill: #2c5fb0; stroke: #16397a; } .org { fill: #e8801c; stroke: #fff; } .blst { stroke: #1c4fb0; stroke-width: 2; } .wfb { fill: #fff; stroke: #222; }
.gn { fill: #5fb040; stroke: #2d7a1a; } .gn2 { fill: #8fcf6f; stroke: #2d7a1a; } .gn3 { stroke: #3c9a2a; stroke-width: 2; } .gnck { stroke: #2c9a2c; stroke-width: 2; } .rf { fill: #c8441c; stroke: #7a2a10; }
.red { stroke: #c83c3c; } .grn { stroke: #3ca03c; } .br { fill: #e9c88c; stroke: #7a5a20; } .thick { stroke-width: 2; } .thick2 { stroke-width: 2.500; stroke: #111; }
.dash { stroke-width: 2; stroke-dasharray: 3 1.500; stroke: #666; } .dash2 { stroke-width: 2.500; stroke-dasharray: 3 1.500; stroke: #333; } .dot { stroke-dasharray: 1.500 1.500; }
.ht { fill: #bbb; stroke-dasharray: 2 0; } .gra { fill: #6e6e6e; } .gy { stroke: #888; } .lg { stroke: #aaa; } .burst { fill: #e85a10; stroke: #f2c01e; } .wf2 { fill: #fff; stroke: #1c7ccf; } .bs3 path { stroke: #1c7ccf; } .bsall path { stroke: #1c7ccf; fill: #e2f0fb; }
.y2 { fill: #e7c53a; } .k2 { fill: #333; } .ors { fill: #fff; stroke: #e06a1c; stroke-width: 1.500; } .chk { fill: #6fb0e6; stroke: #1c6fb8; stroke-dasharray: 2 1; } .wfn { fill: #fff; stroke: none; }
.ball-b { fill: #2b78c8; stroke: none; } .ball-o { fill: #e6a32e; stroke: none; } .ns { stroke: none; } .bs2 { fill: #cfe6f8; fill-opacity: .6; }

/* logo */
.logo { position: absolute; left: 0; top: 0; width: 40px; height: 40px; z-index: 5; background: linear-gradient(#a0a0a0, #6e6e6e); border-right: 1px solid #555; border-bottom: 1px solid #444; }
.logosvg { width: 38px; height: 39px; display: block; }
.lgr { fill: #d42a26; } .lgd { fill: #8a1512; } .lgh { fill: #ee6a60; }
.logoarrow { position: absolute; right: 1px; top: 22px; border: 4px solid transparent; border-top: 5px solid #222; }

/* title */
.titlebar { height: 24px; flex: none; display: flex; align-items: center; background: linear-gradient(#8d8d8d, #777 50%, #6d6d6d); }
.qat { margin-left: 46px; display: flex; align-items: center; width: 227px; flex: none; }
.q { width: 23.600px; display: flex; justify-content: center; }
.q.wide { margin-left: 6px; }
.qd { width: 0; height: 0; border: 3px solid transparent; border-top: 4px solid #444; margin: 3px 0 0 0; flex: none; }
.wi { stroke: #2c2c2c; }
.wi.dim { opacity: .55; }
.wscombo { width: 179px; height: 20px; flex: none; display: flex; align-items: center; gap: 2px; background: linear-gradient(#f2f2f2, #d4d4d4); border-radius: 2px; font-size: 12.500px; padding: 0 4px 0 1px; position: relative; margin-left: 1px; }
.wscombo .car { margin-left: auto; }
.car { width: 0; height: 0; border-left: 4px solid transparent; border-right: 4px solid transparent; border-top: 5px solid #222; flex: none; }
.car.ga { border-top-color: #aaa; }
.qmore { width: 16px; display: flex; justify-content: center; flex: none; border-top: 2px solid #222; margin-left: 0; height: 9px; margin-top: -2px; padding-top: 2px; }
.glass { width: 247px; height: 24px; flex: none; display: flex; gap: 16px; padding: 0 0 2px 31px; align-items: center; font-size: 12.500px; color: #1e2430;
  background: radial-gradient(30px 12px at 28px 22px, rgba(235,120,120,.55), transparent), radial-gradient(60px 24px at 100px 20px, #f0f6fa, transparent), radial-gradient(60px 24px at 30px 4px, #1c6fc0, transparent), linear-gradient(90deg, #dfeefa 0, #bcd8ec 40%, #4f97c8 70%, #2a78b8 100%); }
.sarrow { width: 13px; height: 24px; flex: none; background: #6c6c6c; position: relative; }
.sarrow::after { content: ""; position: absolute; left: 4px; top: 8px; border: 4px solid transparent; border-left: 5px solid #111; }
.search { width: 178px; height: 20px; flex: none; background: #fff; font-size: 11.500px; font-style: italic; color: #9a9a9a; padding: 3px 0 0 2px; margin-right: 3px; }
.info { flex: 1; display: flex; align-items: center; height: 24px; min-width: 0; padding-left: 3px; }
.login { margin-left: 5px; }
.login-t { color: #eee; font-size: 12px; margin-left: 1px; white-space: nowrap; flex: none; }
.qd2 { width: 0; height: 0; border: 3px solid transparent; border-top: 4px solid #444; margin: 3px 0 0 0; flex: none; }
.login-t + .qd2 { margin-left: 60px; }
.info .x { margin-left: 7px; }
.help1 { margin-left: 7px; }
.help2 { margin-left: 18px; }
.info svg + .qd2 { margin-left: 4px; }
.glass2 { width: 133px; height: 24px; flex: none; display: flex; align-items: flex-start; padding-left: 29px; background: radial-gradient(30px 14px at 14px 12px, #e9f3f8, transparent), radial-gradient(40px 20px at 90px 0, #2a6cb4, transparent), linear-gradient(90deg, #5f91bf, #3c72aa 40%, #2b5d98 100%); }
.wb { display: flex; justify-content: center; width: 26px; height: 17px; color: #fff; font-size: 11px; border: 1px solid rgba(255,255,255,.45); border-top: 0; font-weight: bold; line-height: 15px; }
.wb.rest { width: 25px; }
.wb.close { width: 50px; font-size: 14px; border-radius: 0 0 4px 0; }

/* menu */
.menubar { height: 21px; flex: none; display: flex; align-items: center; gap: 24px; padding: 0 5px 1px 55px; color: #e8e8e8; font-size: 12px; background: linear-gradient(#808080, #565656); border-bottom: 1px solid #3c3c3c; }
.menubar u { text-underline-offset: 1px; }
.docbtns { margin-left: auto; display: flex; align-items: center; gap: 6px; }
.d1 { width: 10px; height: 2px; background: #ddd; margin-top: 8px; }
.d2 { width: 12px; height: 12px; border: 1px solid #ddd; }
.d3 { color: #eee; font-size: 13px; font-weight: bold; margin-right: 0; }

/* toolbars */
.row { display: flex; flex: none; }
.r1 { height: 24px; padding: 0 0 0 2px; gap: 2px; }
.r2 { height: 24px; margin-top: 3px; padding-left: 2px; gap: 2px; }
.tb { display: flex; align-items: center; height: 24px; background: #ececec; border: 1px solid #3f3f3f; border-top-color: #4a4a4a; }
.t-std { width: 644px; }
.t-end { flex: 1; }
.t-sty { width: 599px; }
.grip { width: 6px; height: 100%; flex: none; background: radial-gradient(circle, #bbb 0.7px, transparent 0.8px) 1px 0 / 3px 3px, #4a4a4a; }
.gripd { width: 1px; flex: none; }
.c { width: 22.750px; height: 100%; display: flex; align-items: center; justify-content: center; flex: none; }
.s { width: 1px; height: 17px; background: #8a8a8a; margin: 0 3px; flex: none; }
.dd { width: 13px; flex: none; display: flex; justify-content: center; }
.dd::after { content: ""; border: 3px solid transparent; border-top: 4px solid #555; margin-top: 3px; }
.dd.gd::after { border-top-color: #aaa; }
.combo { height: 20px; flex: none; display: flex; align-items: center; justify-content: center; position: relative; background: linear-gradient(#f6f6f6, #dcdcdc 50%, #c4c4c4); border: 1px solid #a8a8a8; border-radius: 3px; font-size: 13px; color: #222; padding: 0 30px 1px 0; }
.combo.left { justify-content: flex-start; padding-left: 3px; padding-right: 14px; }
.combo > .car { position: absolute; right: 3px; top: 6px; }
.c-a { width: 24px; }
.gs { width: 5px; height: 100%; flex: none; background: linear-gradient(90deg, #ececec 0, #ececec 1px, #888 1px, #888 2px, #f4f4f4 2px, #f4f4f4 3px, #888 3px, #888 4px, #ececec 4px); margin: 0 1px; }
.w-std { width: 118.500px; }
.w-iso2 { padding-right: 42px; }
.t-ws { width: 228px; }
.w-ws { width: 174px; font-size: 12.500px; }
.combo.w-ws { padding-left: 8px; }
.t-lay { width: 400px; }
.c-l { width: 23.500px; }
.w-lay { width: 300px; }
.combo.w-lay { padding-left: 1px; }
.ic-s { width: 16px; }
.sw { width: 10px; height: 10px; background: #fff; border: 1px solid #111; margin-left: 1px; flex: none; }
.sw.sm { margin-right: 2px; margin-left: 3px; }
.zero { margin-left: 4px; font-size: 12px; }
.t-prop { width: 582px; }
.t-prop .gs { margin: 0 2px; }
.t-prop .gs.g0 { margin: 0 2px 0 0; width: 6px; }
.combo.serif { font-family: "Liberation Serif", serif; font-size: 11px; letter-spacing: .3px; }
.w-col { width: 147px; }
.w-lt { width: 157px; }
.w-lw { width: 123px; }
.combo.w-bc { width: 118px; background: #f0f0f0; color: #8a8a8a; border-color: #d4d4d4; padding-left: 8px; font-size: 9.500px; letter-spacing: 0; }
.off { }
.ln { width: 60px; height: 1px; background: #222; margin: 0 5px 0 0; flex: none; }
.ln.sh { width: 35px; margin-left: 2px; height: 1.500px; }

/* main */
.main { display: flex; height: 771px; flex: none; margin-top: 1px; }
.lcol { width: 30px; flex: none; padding: 4px 0 0 1px; }
.rcol { width: 33px; flex: none; padding: 3px 0 0 6px; display: flex; flex-direction: column; gap: 3px; }
.vtb { width: 23px; background: #ececec; border: 1px solid #3f3f3f; border-top: 0; display: flex; flex-direction: column; align-items: center; }
.v-draw { height: 447px; }
.v-mod { height: 405px; }
.v-ord { height: 144px; }
.vgrip { width: 100%; height: 8px; flex: none; background: radial-gradient(circle, #ccc 0.7px, transparent 0.8px) 2px 1px / 3px 3px, #4a4a4a; }
.v { width: 100%; height: 22px; flex: none; display: flex; align-items: center; justify-content: center; position: relative; }
.vA { font-size: 22px; color: #222; font-family: "Liberation Sans", sans-serif; font-weight: normal; }
.vsep { width: 19px; height: 1px; background: #999; margin: 5px 0; flex: none; }
.abc { font-family: "Liberation Mono", monospace; font-size: 7.500px; position: absolute; left: 4px; top: 3px; font-weight: bold; z-index: 1; }
.abcs { position: relative; }

.work { width: 1217px; flex: none; padding-top: 4px; display: flex; flex-direction: column; }
.wtop { height: 751px; display: flex; flex: none; }
.viewport { width: 1199px; height: 751px; flex: none; position: relative; background: #212830; overflow: hidden; }
.vplabel { position: absolute; left: 5px; top: 4px; color: #e8e8e8; font-size: 12px; letter-spacing: .35px; white-space: nowrap; }
.scene { width: 1199px; height: 751px; display: block; shape-rendering: crispEdges; }
.scene .sb { fill: url(#sg); }
.sh { fill: url(#sd); }
.h1 { fill: #fff; stroke: #fff; stroke-width: 8px; stroke-linejoin: round; filter: url(#bl1); }
.h2 { fill: #f4f4f4; stroke: #f4f4f4; stroke-width: 2px; stroke-linejoin: round; filter: url(#bl2); opacity: .72; }
.h3 { fill: #efefef; stroke: #efefef; stroke-width: 6px; stroke-linejoin: round; filter: url(#bl1); opacity: .8; }
.ring { fill: none; stroke: #454a52; stroke-width: 13px; }
.vcdir { font-size: 13px; fill: #c4c6ca; text-anchor: middle; font-family: "Noto Sans CJK SC", sans-serif; }
.vcdirb { font-size: 19px; fill: #c8cacd; text-anchor: middle; font-family: "Noto Sans CJK SC", sans-serif; }
.cube-l { fill: #a9a9ab; } .cube-r { fill: #939395; } .cube-t { fill: #bdbdbe; }
.cube-c { fill: #b0b3bc; opacity: .55; }
.cubet { font-size: 22px; fill: #6e6e70; font-family: "Noto Sans CJK SC", sans-serif; font-weight: 300; }
.ux { stroke: #c03030; fill: none; stroke-width: 1; }
.uy { stroke: #10b020; fill: none; stroke-width: 1; }
.uz { stroke: #1c7ce0; fill: none; stroke-width: 1; }
.barr { stroke: #a82828; stroke-width: 5; }
.barg { stroke: #108018; stroke-width: 5; }
.barb { stroke: #1c70d8; stroke-width: 5; }
.barw { fill: #a6ff9a; }
.vcname { position: absolute; left: 1088px; top: 169px; width: 58px; height: 17px; background: #7f8290; border-radius: 4px; color: #a8aab2; font-size: 10px; display: flex; align-items: center; padding-left: 5px; gap: 4px; letter-spacing: 1px; border: 1px solid #92949f; }
.vcname i { width: 0; height: 0; border: 4px solid transparent; border-top: 5px solid #a8aab2; margin-top: 5px; }
.ft { position: absolute; height: 23px; display: flex; align-items: center; background: #ececec; }
.ft1 { left: 163px; top: 11px; width: 474px; }
.ft2 { left: 656px; top: 11px; width: 166px; }
.ft3 { left: 83px; top: 49px; width: 540px; }
.fgrip { width: 8px; height: 100%; flex: none; background: radial-gradient(circle, #aaa 0.7px, transparent 0.8px) 1px 0 / 3px 3px, #555; }
.c.f { width: 23px; }
.ft .s { margin: 0 2px 0 2px; }
.combo.fcombo { width: 140px; background: #f1f1f1; border-color: #ccc; margin-left: 3px; padding: 0; }
.fx { margin-left: auto; width: 7px; height: 100%; background: #555; color: #fff; font-size: 11px; line-height: 9px; text-align: center; font-weight: bold; }

.vscroll { width: 18px; height: 751px; flex: none; background: #f0f0f0; position: relative; display: flex; flex-direction: column; align-items: center; }
.ua, .da { width: 0; height: 0; border: 4px solid transparent; }
.ua { border-bottom: 5px solid #333; margin-top: 6px; }
.da { border-top: 5px solid #333; margin-top: auto; margin-bottom: 3px; }
.vthumb { position: absolute; left: 1px; top: 339px; width: 16px; height: 15px; background: linear-gradient(90deg, #ddd, #c0c0c0); border: 1px solid #aaa; border-radius: 2px; }

.tabs { height: 16px; flex: none; background: #f0f0f0; display: flex; align-items: center; border-top: 1px solid #ccc; font-size: 12px; }
.nav { display: flex; margin-left: 3px; width: 54px; height: 13px; border: 1px solid #bbb; border-radius: 2px; background: #e2e2e2; align-items: center; justify-content: space-around; flex: none; }
.nav i { width: 0; height: 0; border: 4px solid transparent; }
.n1, .n2 { border-right: 5px solid #444 !important; border-left: 0 !important; }
.n3, .n4 { border-left: 5px solid #444 !important; border-right: 0 !important; }
.tab { height: 15px; padding: 0 5px; line-height: 15px; color: #333; position: relative; margin-right: 6px; flex: none; white-space: nowrap; }
.tab::after { content: ""; position: absolute; right: -1px; top: 0; width: 1px; height: 15px; background: #444; transform: skewX(-18deg); }
.tab.active { color: #fff; padding: 0 6px; margin: 0 2px 0 6px; z-index: 0; }
.tab.active::before { content: ""; position: absolute; inset: 0; background: #2a2a2f; transform: skewX(-18deg); z-index: -1; }
.hscroll { width: 430px; height: 15px; position: relative; margin-left: auto; flex: none; background: linear-gradient(90deg, #f0f0f0 15px, #e8e8e8 15px, #e8e8e8 400px, #f0f0f0 400px); }
.hgrab { position: absolute; left: 5px; top: 1px; width: 5px; height: 13px; background: #fff; border: 1px solid #aaa; border-radius: 2px; }
.la { position: absolute; left: 15px; top: 3px; border: 4px solid transparent; border-right: 5px solid #333; border-left: 0; }
.ra { position: absolute; left: 402px; top: 3px; border: 4px solid transparent; border-left: 5px solid #333; border-right: 0; }
.hthumb { position: absolute; left: 295px; top: 1px; width: 16px; height: 13px; background: linear-gradient(#ddd, #b8b8b8); border: 1px solid #aaa; border-radius: 2px; }

/* dim */
.dimrow { margin-top: 4px; padding-left: 30px; height: 25px; }
.t-dim { width: 640px; height: 25px; }
.c.d { width: 23px; }
.t-dim .s { margin: 0 2.500px; }
.w-iso { width: 118px; }

/* command */
.cmd { margin-top: 8px; height: 58px; flex: none; display: flex; }
.cmdside { width: 22px; background: #4e4e4e; flex: none; display: flex; flex-direction: column; align-items: center; }
.cgrip { width: 100%; height: 10px; background: radial-gradient(circle, #c8c8c8 0.8px, transparent 0.9px) 1px 1px / 3px 3px, #7c7c7c; }
.cx { color: #fff; font-size: 15px; line-height: 22px; font-weight: bold; }
.wrench { margin-top: 3px; }
.cmdmain { flex: 1; display: flex; flex-direction: column; }
.hist { height: 34px; background: #c6c6c6; padding: 1px 0 0 4px; border-bottom: 1px solid #555; font-family: "Liberation Mono", "Noto Sans CJK SC", monospace; font-size: 11.670px; color: #111; flex: none; }
.hist p { margin: 0; height: 15px; line-height: 15px; white-space: nowrap; }
.zh { font-size: 12.500px; letter-spacing: 1.500px; }
.cinput { flex: 1; background: #fff; display: flex; align-items: center; border-bottom: 2px solid #3a3a3a; padding-left: 6px; }
.prompt { width: 15px; height: 15px; background: linear-gradient(#eaeaea, #bcc4cc); border: 1px solid #889; font-family: "Liberation Mono", monospace; font-size: 9.500px; line-height: 13px; color: #111; text-align: center; font-weight: bold; }
.pd { border: 3px solid transparent; border-top: 4px solid #999; margin: 3px 0 0 3px; }
.ph { margin-left: 7px; font-style: italic; color: #999; font-size: 11.500px; letter-spacing: 1px; }

/* status */
.status { flex: 1; display: flex; align-items: stretch; background: linear-gradient(#8c8c8c, #666); border-top: 1px solid #2a2a2a; min-height: 0; }
.coords { width: 213px; padding: 4px 0 0 11px; color: #9a9a9a; font-size: 11.500px; letter-spacing: .5px; flex: none; white-space: nowrap; }
.sgrp { display: flex; height: 100%; flex: none; }
.status .sb { width: 21.700px; height: 100%; display: flex; align-items: center; justify-content: center; background: linear-gradient(#d4d4d4, #a4a4a4); border-left: 1px solid #707070; flex: none; }
.status .on { background: linear-gradient(#cfe7ee, #8ec2d2); }
.status .on2 { background: linear-gradient(90deg, #c8e2ea 50%, #c8c8c8 50%); }
.status .on3 { background: linear-gradient(#d0e8f4, #a8cfe6); }
.sright { margin-left: auto; display: flex; height: 100%; flex: none; padding-right: 5px; }
.sm-t { width: 30px; border-left: 1px solid #555; background: linear-gradient(#d4d4d4, #a4a4a4); display: flex; align-items: center; justify-content: center; color: #111; font-size: 13px; flex: none; }
.status .wide { width: 21px; }
.gap { width: 19px; background: #8c8c8c; border-left: 1px solid #707070; flex: none; }
.gap2 { width: 7px; background: #555; flex: none; }
.status .anno { width: 54px; gap: 2px; justify-content: flex-start; padding-left: 3px; }
.anno b { font-weight: normal; font-size: 11.500px; letter-spacing: 1px; }
.anno .car { margin: -5px 0 0 1px; }
.status .bulb { background: linear-gradient(#777, #999); width: 30px; }
.stri { width: 12px; background: #a8a8a8; display: flex; align-items: center; justify-content: center; flex: none; }
.stri .car { border-width: 5px 3px 0; }

/* watermark */
.watermark { position: absolute; left: 0; top: 0; width: 1280px; height: 984px; pointer-events: none; z-index: 9; color: rgba(255,255,255,.66); }
.wm-bai { position: absolute; left: 982px; top: 866px; font: bold 52px/60px "Liberation Sans", sans-serif; letter-spacing: -1px; }
.wm-paw { position: absolute; left: 1060px; top: 851px; width: 68px; height: 72px; fill: rgba(255,255,255,.72); stroke: none; }
.wm-du { font: bold 21px "Liberation Sans", sans-serif; fill: rgba(70,70,70,.55); text-anchor: middle; }
.wm-zh { position: absolute; left: 1129px; top: 871px; font: bold 39px/52px "Noto Sans CJK SC", sans-serif; letter-spacing: 1px; }
.wm-url { position: absolute; left: 983px; top: 922px; font: 28px/34px "Liberation Sans", sans-serif; color: rgba(255,255,255,.6); -webkit-text-stroke: .6px rgba(130,130,130,.5); }
```
